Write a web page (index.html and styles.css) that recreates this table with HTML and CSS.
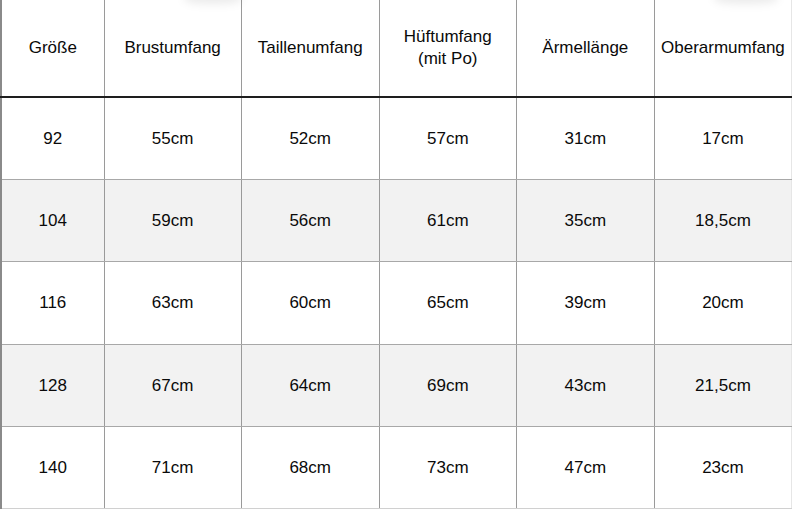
FILE: index.html
```html
<!DOCTYPE html>
<html lang="de">
<head>
<meta charset="utf-8">
<title>Größentabelle</title>
<link rel="stylesheet" href="styles.css">
</head>
<body>
<div class="wrap">
  <div class="shade shade-a"></div>
  <div class="shade shade-b"></div>
  <table class="sizes">
    <colgroup>
      <col class="c1"><col class="c2"><col class="c3"><col class="c4"><col class="c5"><col class="c6">
    </colgroup>
    <thead>
      <tr>
        <th>Größe</th>
        <th>Brustumfang</th>
        <th>Taillenumfang</th>
        <th>Hüftumfang<br>(mit Po)</th>
        <th>Ärmellänge</th>
        <th>Oberarmumfang</th>
      </tr>
    </thead>
    <tbody>
      <tr><td>92</td><td>55cm</td><td>52cm</td><td>57cm</td><td>31cm</td><td>17cm</td></tr>
      <tr class="alt"><td>104</td><td>59cm</td><td>56cm</td><td>61cm</td><td>35cm</td><td>18,5cm</td></tr>
      <tr class="tall"><td>116</td><td>63cm</td><td>60cm</td><td>65cm</td><td>39cm</td><td>20cm</td></tr>
      <tr class="alt"><td>128</td><td>67cm</td><td>64cm</td><td>69cm</td><td>43cm</td><td>21,5cm</td></tr>
      <tr><td>140</td><td>71cm</td><td>68cm</td><td>73cm</td><td>47cm</td><td>23cm</td></tr>
    </tbody>
  </table>
</div>
</body>
</html>
```

FILE: styles.css
```css
html, body {
  margin: 0;
  padding: 0;
  background: #ffffff;
}

.wrap {
  position: relative;
  width: 792px;
  height: 509px;
  overflow: hidden;
}

.shade {
  position: absolute;
  top: -9px;
  height: 13px;
  border-radius: 40%;
  background: rgba(0, 0, 0, 0.08);
  filter: blur(4px);
}

.shade-a {
  left: 184px;
  width: 58px;
}

.shade-b {
  left: 714px;
  width: 64px;
}

.sizes {
  border-collapse: collapse;
  table-layout: fixed;
  width: 792px;
  font-family: "Liberation Sans", Arial, sans-serif;
  font-size: 17px;
  color: #0a0a0a;
  border-left: 2px solid #8a8a8a;
}

.c1 { width: 103px; }
.c2 { width: 137px; }
.c3 { width: 138px; }
.c4 { width: 137px; }
.c5 { width: 138px; }
.c6 { width: 137px; }

.sizes th,
.sizes td {
  text-align: center;
  vertical-align: middle;
  padding: 0;
  border-right: 1px solid #9a9a9a;
}

.sizes th {
  font-weight: normal;
  height: 96px;
  line-height: 22px;
  border-bottom: 2px solid #1e1e1e;
}

.sizes td {
  height: 81px;
  border-bottom: 1px solid #a8a8a8;
}

.sizes .tall td {
  height: 82px;
}

.sizes th:last-child,
.sizes td:last-child {
  border-right: 1px solid #e6e6e6;
}

.sizes tbody tr:last-child td {
  border-bottom: 1px solid #d0d0d0;
}

.sizes .alt td {
  background: #f2f2f2;
}
```
